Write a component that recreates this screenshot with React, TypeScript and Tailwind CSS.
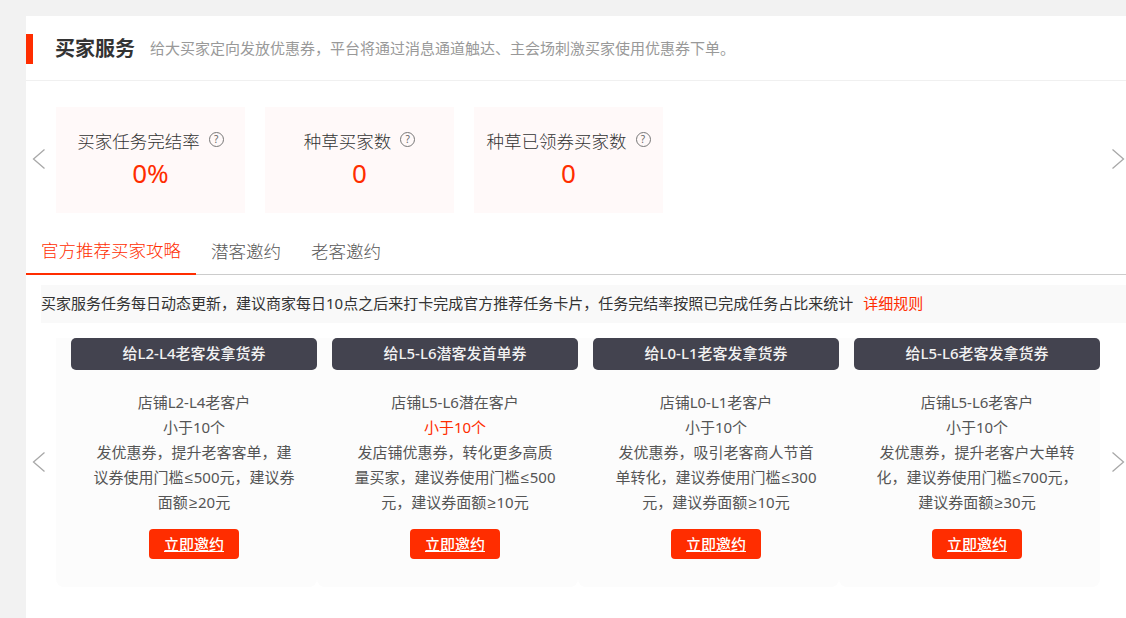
const font = { fontFamily: '"Noto Sans", "Noto Sans CJK SC", sans-serif' }

const stats = [
  { label: "买家任务完结率", value: "0%" },
  { label: "种草买家数", value: "0" },
  { label: "种草已领券买家数", value: "0" },
]

const tabs = ["官方推荐买家攻略", "潜客邀约", "老客邀约"]

const cards = [
  {
    title: "给L2-L4老客发拿货券",
    target: "店铺L2-L4老客户",
    count: "小于10个",
    warn: false,
    lines: ["发优惠券，提升老客客单，建", "议券使用门槛≤500元，建议券", "面额≥20元"],
  },
  {
    title: "给L5-L6潜客发首单券",
    target: "店铺L5-L6潜在客户",
    count: "小于10个",
    warn: true,
    lines: ["发店铺优惠券，转化更多高质", "量买家，建议券使用门槛≤500", "元，建议券面额≥10元"],
  },
  {
    title: "给L0-L1老客发拿货券",
    target: "店铺L0-L1老客户",
    count: "小于10个",
    warn: false,
    lines: ["发优惠券，吸引老客商人节首", "单转化，建议券使用门槛≤300", "元，建议券面额≥10元"],
  },
  {
    title: "给L5-L6老客发拿货券",
    target: "店铺L5-L6老客户",
    count: "小于10个",
    warn: false,
    lines: ["发优惠券，提升老客户大单转", "化，建议券使用门槛≤700元，", "建议券面额≥30元"],
  },
]

function Arrow({ dir, className }: { dir: "left" | "right"; className: string }) {
  return (
    <svg className={className} width="14" height="20" viewBox="0 0 14 20" fill="none" stroke="#a8a8a8" strokeWidth="1.3">
      <path d={dir === "left" ? "M12.5 0.5 L1.5 10 L12.5 19.5" : "M1.5 0.5 L12.5 10 L1.5 19.5"} />
    </svg>
  )
}

// the ≤ ≥ signs are narrow in the picture, the CJK font draws them too wide
function CardLine({ text }: { text: string }) {
  const parts = text.split(/([≤≥])/)
  return (
    <div className="whitespace-nowrap">
      {parts.map((part, i) =>
        part === "≤" || part === "≥" ? (
          <span key={i} className="mx-px font-['Liberation_Sans']">
            {part}
          </span>
        ) : (
          part
        ),
      )}
    </div>
  )
}

export default function App() {
  return (
    <div className="h-[618px] overflow-hidden bg-[#f2f2f2] pl-[26px] pt-4" style={font}>
      <div className="h-[602px] bg-white">
        <div className="flex h-[65px] items-center border-b border-[#f0f0f0] pt-[2px]">
          <div className="h-[30px] w-[7px] bg-[#ff2d00]" />
          <h1 className="-mt-px ml-[22px] text-[20px] font-bold text-[#333]">买家服务</h1>
          <p className="-mt-px ml-[15px] text-[15px] text-[#999]">
            给大买家定向发放优惠券，平台将通过消息通道触达、主会场刺激买家使用优惠券下单。
          </p>
        </div>

        <div className="relative mt-[26px] flex gap-5 pl-[30px]">
          <Arrow dir="left" className="absolute left-[6px] top-[42px]" />
          <Arrow dir="right" className="absolute left-[1085px] top-[42px]" />
          {stats.map((s) => (
            <div key={s.label} className="flex h-[106px] w-[189px] flex-col items-center bg-[#fff9f9] pt-[19px]">
              <div className="flex h-[30px] items-center gap-[9px]">
                <span className="text-[17.5px] font-light text-[#333]">{s.label}</span>
                <span className="mb-1 flex h-[15px] w-[15px] items-center justify-center rounded-full border border-[#777] text-[10px] leading-none text-[#666]">
                  ?
                </span>
              </div>
              <div className="-mt-px text-[26px] leading-[36px] text-[#ff2d00]">{s.value}</div>
            </div>
          ))}
        </div>

        <div className="mt-4 flex h-[46px] border-b border-[#ccc]">
          {tabs.map((tab, i) => (
            <div
              key={tab}
              className={
                i === 0
                  ? "-mb-px flex h-[46px] items-center border-b-2 border-[#ff2d00] px-[15px] pb-[2px] text-[17.5px] font-light text-[#ff2d00]"
                  : "flex h-[45px] items-center px-[15px] text-[17.5px] font-light text-[#555]"
              }
            >
              {tab}
            </div>
          ))}
        </div>

        <div className="ml-[15px] mt-[10px] flex h-[38px] items-center bg-[#f9f9f9] pb-[2px] text-[15px] text-[#333]">
          买家服务任务每日动态更新，建议商家每日10点之后来打卡完成官方推荐任务卡片，任务完结率按照已完成任务占比来统计
          <span className="ml-[10px] text-[#ff2d00]">详细规则</span>
        </div>

        <div className="relative mt-[15px] flex pl-[30px]">
          <Arrow dir="left" className="absolute left-[6px] top-[114px]" />
          <Arrow dir="right" className="absolute left-[1085px] top-[114px]" />
          {cards.map((c) => (
            <div key={c.title} className="h-[249px] w-[261px] rounded-b-lg bg-[#fcfcfc] pl-[15px]">
              <div className="flex h-[32px] items-center justify-center rounded-[5px] bg-[#43434f] pb-[2px] text-[15px] font-medium text-[#f2f2f2]">
                {c.title}
              </div>
              <div className="mt-5 flex flex-col items-center text-[15px] leading-[25px] text-[#555]">
                <div>{c.target}</div>
                <div className={c.warn ? "text-[#ff2d00]" : ""}>{c.count}</div>
                {c.lines.map((line) => (
                  <CardLine key={line} text={line} />
                ))}
                <button className="mt-[14px] h-[30px] w-[90px] rounded bg-[#ff2d00] text-[15px] font-medium leading-[30px] text-white underline">
                  立即邀约
                </button>
              </div>
            </div>
          ))}
        </div>
      </div>
    </div>
  )
}
